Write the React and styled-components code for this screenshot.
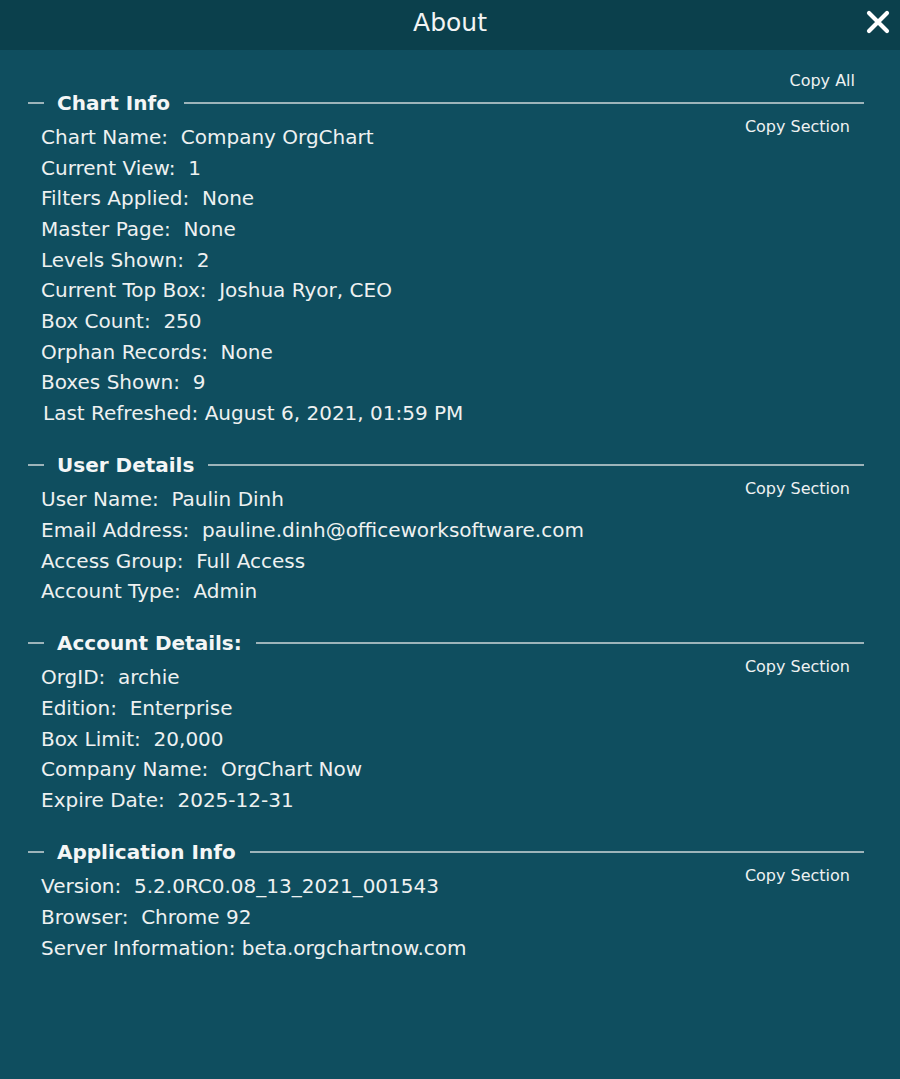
import React from "react";
import styled, { createGlobalStyle } from "styled-components";

const Global = createGlobalStyle`
  html, body { margin: 0; padding: 0; background: #0f4e5f; }
  body { font-family: "DejaVu Sans", Verdana, sans-serif; color: #eef1f1; }
`;

const Page = styled.div`
  width: 900px;
  min-height: 1079px;
  background: #0f4e5f;
`;

const Header = styled.header`
  height: 50px;
  background: #0b404c;
  display: flex;
  align-items: center;
  justify-content: center;
  position: relative;
`;

const Title = styled.h1`
  margin: 0 0 6px;
  font-size: 25px;
  font-weight: normal;
  color: #f2f4f4;
`;

const Close = styled.button`
  position: absolute;
  right: 10px;
  top: 10px;
  width: 24px;
  height: 24px;
  padding: 0;
  border: 0;
  background: none;
  cursor: pointer;
  display: flex;
`;

const Body = styled.main`
  padding: 20px 36px 0 28px;
`;

const CopyAllRow = styled.div`
  display: flex;
  justify-content: flex-end;
  padding-right: 9px;
`;

const LinkButton = styled.button`
  border: 0;
  background: none;
  padding: 0;
  color: #eef1f1;
  font-family: inherit;
  font-size: 16px;
  line-height: 22px;
  cursor: pointer;
`;

const Section = styled.section`
  margin-bottom: ${(p) => p.$gap}px;
`;

const Legend = styled.div`
  display: flex;
  align-items: center;
  height: 22px;
`;

const Dash = styled.span`
  width: 16px;
  height: 2px;
  background: #9db4ba;
`;

const LegendText = styled.h2`
  margin: 0 14px 0 13px;
  font-size: 20px;
  font-weight: bold;
  color: #f4f6f6;
`;

const Rule = styled.span`
  flex: 1;
  height: 2px;
  background: #9db4ba;
`;

const SectionBody = styled.div`
  display: flex;
  justify-content: space-between;
  align-items: flex-start;
`;

const Rows = styled.div`
  padding-left: 13px;
  padding-top: 8px;
`;

const Row = styled.div`
  font-size: 20px;
  line-height: 30.67px;
  white-space: pre;
  padding-left: ${(p) => (p.$nudge ? 2 : 0)}px;
`;

const SectionCopy = styled(LinkButton)`
  margin-right: 14px;
  margin-top: 2px;
`;

const sections = [
  {
    title: "Chart Info",
    rows: [
      "Chart Name:  Company OrgChart",
      "Current View:  1",
      "Filters Applied:  None",
      "Master Page:  None",
      "Levels Shown:  2",
      "Current Top Box:  Joshua Ryor, CEO",
      "Box Count:  250",
      "Orphan Records:  None",
      "Boxes Shown:  9",
      { text: "Last Refreshed: August 6, 2021, 01:59 PM", nudge: true },
    ],
  },
  {
    title: "User Details",
    rows: [
      "User Name:  Paulin Dinh",
      "Email Address:  pauline.dinh@officeworksoftware.com",
      "Access Group:  Full Access",
      "Account Type:  Admin",
    ],
  },
  {
    title: "Account Details:",
    rows: [
      "OrgID:  archie",
      "Edition:  Enterprise",
      "Box Limit:  20,000",
      "Company Name:  OrgChart Now",
      "Expire Date:  2025-12-31",
    ],
  },
  {
    title: "Application Info",
    rows: [
      "Version:  5.2.0RC0.08_13_2021_001543",
      "Browser:  Chrome 92",
      "Server Information: beta.orgchartnow.com",
    ],
  },
];

export default function App() {
  return (
    <Page>
      <Global />
      <Header>
        <Title>About</Title>
        <Close aria-label="Close">
          <svg width="24" height="24" viewBox="0 0 24 24">
            <path d="M3 3 L21 21 M21 3 L3 21" stroke="#ffffff" strokeWidth="4.2" strokeLinecap="round" />
          </svg>
        </Close>
      </Header>
      <Body>
        <CopyAllRow>
          <LinkButton>Copy All</LinkButton>
        </CopyAllRow>
        {sections.map((s) => (
          <Section key={s.title} $gap={25.5}>
            <Legend>
              <Dash />
              <LegendText>{s.title}</LegendText>
              <Rule />
            </Legend>
            <SectionBody>
              <Rows>
                {s.rows.map((r, i) => {
                  const t = typeof r === "string" ? r : r.text;
                  return (
                    <Row key={i} $nudge={typeof r !== "string"}>
                      {t}
                    </Row>
                  );
                })}
              </Rows>
              <SectionCopy>Copy Section</SectionCopy>
            </SectionBody>
          </Section>
        ))}
      </Body>
    </Page>
  );
}
